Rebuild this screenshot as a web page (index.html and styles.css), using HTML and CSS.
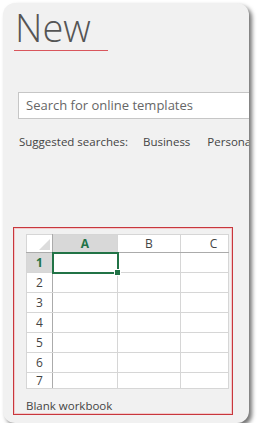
FILE: index.html
```html
<!DOCTYPE html>
<html lang="en">
<head>
  <meta charset="UTF-8">
  <title>New</title>
  <link rel="stylesheet" href="styles.css">
</head>
<body>

  <div class="panel">
    <h1 class="title">New</h1>

    <div class="search">Search for online templates</div>

    <div class="suggested">
      <span class="label">Suggested searches:</span>
      <span class="tag">Business</span>
      <span class="tag">Personal</span>
    </div>

    <div class="tile">
      <table class="sheet">
        <colgroup>
          <col class="c-head">
          <col class="c-a">
          <col class="c-b">
          <col class="c-c">
        </colgroup>
        <tr class="cols">
          <th class="corner"></th>
          <th class="active">A</th>
          <th>B</th>
          <th class="col-c">C</th>
        </tr>
        <tr>
          <th class="active">1</th>
          <td class="selected"><span class="handle"></span></td>
          <td></td><td></td>
        </tr>
        <tr><th>2</th><td></td><td></td><td></td></tr>
        <tr><th>3</th><td></td><td></td><td></td></tr>
        <tr><th>4</th><td></td><td></td><td></td></tr>
        <tr><th>5</th><td></td><td></td><td></td></tr>
        <tr><th>6</th><td></td><td></td><td></td></tr>
        <tr class="last"><th>7</th><td></td><td></td><td></td></tr>
      </table>
      <div class="caption">Blank workbook</div>
    </div>
  </div>

</body>
</html>
```

FILE: styles.css
```css
body { margin: 0; background: #fff; font-family: "Open Sans", "Noto Sans", sans-serif; }

.panel {
  margin: 3px 0 0 3px;
  width: 246px;
  height: 420px;
  box-sizing: border-box;
  padding-top: 2px;
  background: #f1f1f1;
  border-radius: 12px;
  box-shadow: 3px 3px 4px rgba(0, 0, 0, 0.55);
  overflow: hidden;
}

.title {
  margin: 0 0 0 11px;
  width: 93px;
  padding: 0 0 1px 1px;
  font-size: 38px;
  font-weight: 300;
  line-height: 44px;
  color: #555;
  border-bottom: 1px solid #d9565c;
}

.search {
  margin: 41px 0 0 15px;
  width: 260px;
  height: 27px;
  box-sizing: border-box;
  padding-left: 7px;
  background: #fff;
  border: 1px solid #c6c6c6;
  font-size: 13px;
  line-height: 25px;
  color: #666;
}

.suggested {
  margin: 15px 0 0 16px;
  display: flex;
  white-space: nowrap;
  font-size: 11.5px;
  line-height: 16px;
  color: #444;
}
.label { width: 124px; flex-shrink: 0; }
.tag { margin-right: 17px; flex-shrink: 0; }

.tile {
  margin: 77px 0 0 10px;
  width: 220px;
  height: 188px;
  box-sizing: border-box;
  padding: 6px 0 0 12px;
  border: 1px solid #c8373c;
  box-shadow: inset 0 0 0 1px #f3c9cb;
}

.sheet {
  width: 202px;
  border-collapse: collapse;
  table-layout: fixed;
  background: #fff;
  border: 1px solid #bdbdbd;
  font-size: 12px;
  color: #444;
}
.c-head { width: 26px; }
.c-a { width: 65px; }
.c-b { width: 63px; }
.c-c { width: 48px; }

.sheet th, .sheet td {
  height: 19px;
  padding: 0;
  border: 1px solid #d6d6d6;
  font-weight: normal;
  text-align: center;
  line-height: 19px;
}
.sheet th:first-child { border-right-color: #ababab; }
.cols th { height: 17px; line-height: 17px; border-bottom-color: #ababab; }
.col-c { padding-left: 18px !important; }
.last th, .last td { height: 15px; line-height: 15px; }

.sheet th.active {
  background: #d8d8d8;
  color: #217346;
  font-weight: bold;
}

.corner { position: relative; }
.corner::after {
  content: "";
  position: absolute;
  right: 2px;
  bottom: 2px;
  border-left: 11px solid transparent;
  border-bottom: 11px solid #dcdcdc;
}

.sheet td.selected {
  position: relative;
  outline: 2px solid #217346;
  outline-offset: -1px;
}
.handle {
  position: absolute;
  right: -4px;
  bottom: -4px;
  width: 5px;
  height: 5px;
  background: #217346;
  border: 1px solid #fff;
}

.caption {
  margin-top: 9px;
  font-size: 11.5px;
  color: #444;
}
```
